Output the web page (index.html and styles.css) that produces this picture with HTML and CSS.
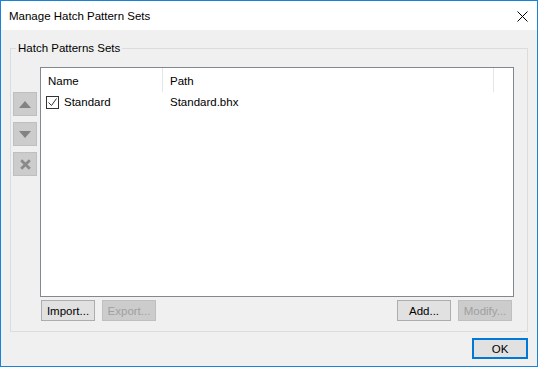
FILE: index.html
```html
<!DOCTYPE html>
<html lang="en">
<head>
    <meta charset="UTF-8">
    <meta name="viewport" content="width=device-width, initial-scale=1.0">
    <title>Manage Hatch Pattern Sets</title>
    <link rel="stylesheet" href="styles.css">
</head>
<body>
    <div class="dialog">
        <div class="titlebar">
            <span class="title">Manage Hatch Pattern Sets</span>
            <svg class="close" width="11" height="11" viewBox="0 0 11 11">
                <path d="M0.5 0.5 L10.5 10.5 M10.5 0.5 L0.5 10.5" stroke="#000" stroke-width="1" fill="none"/>
            </svg>
        </div>
        <div class="content">
            <fieldset class="group">
                <legend>Hatch Patterns Sets</legend>
                <div class="side">
                    <button class="side-btn" disabled>
                        <svg width="12" height="7" viewBox="0 0 12 7"><path d="M6 0 L12 7 L0 7 Z" fill="#838383"/></svg>
                    </button>
                    <button class="side-btn" disabled>
                        <svg width="12" height="7" viewBox="0 0 12 7"><path d="M0 0 L12 0 L6 7 Z" fill="#838383"/></svg>
                    </button>
                    <button class="side-btn" disabled>
                        <svg width="11" height="11" viewBox="0 0 11 11"><path d="M1.2 1.2 L9.8 9.8 M9.8 1.2 L1.2 9.8" stroke="#8a8a8a" stroke-width="2.8" fill="none"/></svg>
                    </button>
                </div>
                <div class="main">
                    <div class="list">
                        <div class="list-head">
                            <div class="col col-name">Name</div>
                            <div class="col col-path">Path</div>
                            <div class="col col-rest"></div>
                        </div>
                        <div class="list-row">
                            <div class="cell cell-name">
                                <span class="check">
                                    <svg width="11" height="11" viewBox="0 0 11 11"><path d="M1.5 5.5 L4.5 8.5 L9.5 1.5" stroke="#333" stroke-width="1" fill="none"/></svg>
                                </span>
                                Standard
                            </div>
                            <div class="cell cell-path">Standard.bhx</div>
                        </div>
                    </div>
                    <div class="actions">
                        <button class="btn">Import...</button>
                        <button class="btn" disabled>Export...</button>
                        <span class="spacer"></span>
                        <button class="btn">Add...</button>
                        <button class="btn" disabled>Modify...</button>
                    </div>
                </div>
            </fieldset>
            <div class="footer">
                <button class="btn btn-ok">OK</button>
            </div>
        </div>
    </div>
</body>
</html>
```

FILE: styles.css
```css
* {
    box-sizing: border-box;
}

body {
    margin: 0;
    padding: 0;
    font-family: "Segoe UI", "Liberation Sans", Arial, sans-serif;
    font-size: 11.5px;
    color: #000;
    background: #f0f0f0;
}

.dialog {
    width: 538px;
    height: 367px;
    border: 1px solid #1883d7;
    display: flex;
    flex-direction: column;
    background: #f0f0f0;
}

.titlebar {
    height: 29px;
    background: #fff;
    display: flex;
    align-items: center;
    justify-content: space-between;
    padding: 0 9px 0 8px;
}

.title {
    line-height: 15px;
    margin-top: 1px;
}

.close {
    display: block;
    margin-top: 1px;
}

.content {
    flex: 1;
    display: flex;
    flex-direction: column;
}

.group {
    flex: 1;
    margin: 11px 9px 0;
    padding: 11px 13px 10px 2px;
    border: 1px solid #dcdcdc;
    display: flex;
    min-width: 0;
}

.group legend {
    margin-left: 3px;
    padding: 0 2px;
    line-height: 15px;
}

.side {
    display: flex;
    flex-direction: column;
    gap: 6px;
    margin-top: 25px;
    margin-right: 3px;
}

.side-btn {
    width: 24px;
    height: 24px;
    padding: 0;
    margin: 0;
    background: #cccccc;
    border: 1px solid #bfbfbf;
    display: flex;
    align-items: center;
    justify-content: center;
}

.side-btn svg {
    display: block;
}

.main {
    flex: 1;
    display: flex;
    flex-direction: column;
}

.list {
    flex: 1;
    background: #fff;
    border: 1px solid #828790;
}

.list-head {
    display: flex;
    height: 24px;
}

.col {
    line-height: 24px;
    padding-left: 7px;
    padding-top: 1px;
    border-right: 1px solid #e5e5e5;
}

.col-name {
    width: 122px;
}

.col-path {
    width: 331px;
}

.col-rest {
    flex: 1;
    border-right: none;
}

.list-row {
    display: flex;
    height: 19px;
    margin-top: 1px;
    align-items: center;
}

.cell {
    line-height: 19px;
}

.cell-name {
    width: 122px;
    padding-left: 5px;
    display: flex;
    align-items: center;
}

.cell-path {
    padding-left: 7px;
}

.check {
    width: 13px;
    height: 13px;
    border: 1px solid #333;
    background: #fff;
    margin-right: 5px;
    display: flex;
    align-items: center;
    justify-content: center;
}

.check svg {
    display: block;
}

.actions {
    display: flex;
    margin-top: 3px;
    padding: 0 2px 0 1px;
}

.spacer {
    flex: 1;
}

.btn {
    width: 54px;
    height: 21px;
    margin: 0;
    padding: 0;
    font-family: inherit;
    font-size: 11.5px;
    color: #000;
    background: #e1e1e1;
    border: 1px solid #adadad;
}

.btn + .btn {
    margin-left: 7px;
}

.btn:disabled {
    background: #cccccc;
    border-color: #bfbfbf;
    color: #a0a0a0;
}

.footer {
    display: flex;
    justify-content: flex-end;
    padding: 6px 9px 7px;
}

.btn-ok {
    width: 56px;
    border: 2px solid #0078d7;
}
```
